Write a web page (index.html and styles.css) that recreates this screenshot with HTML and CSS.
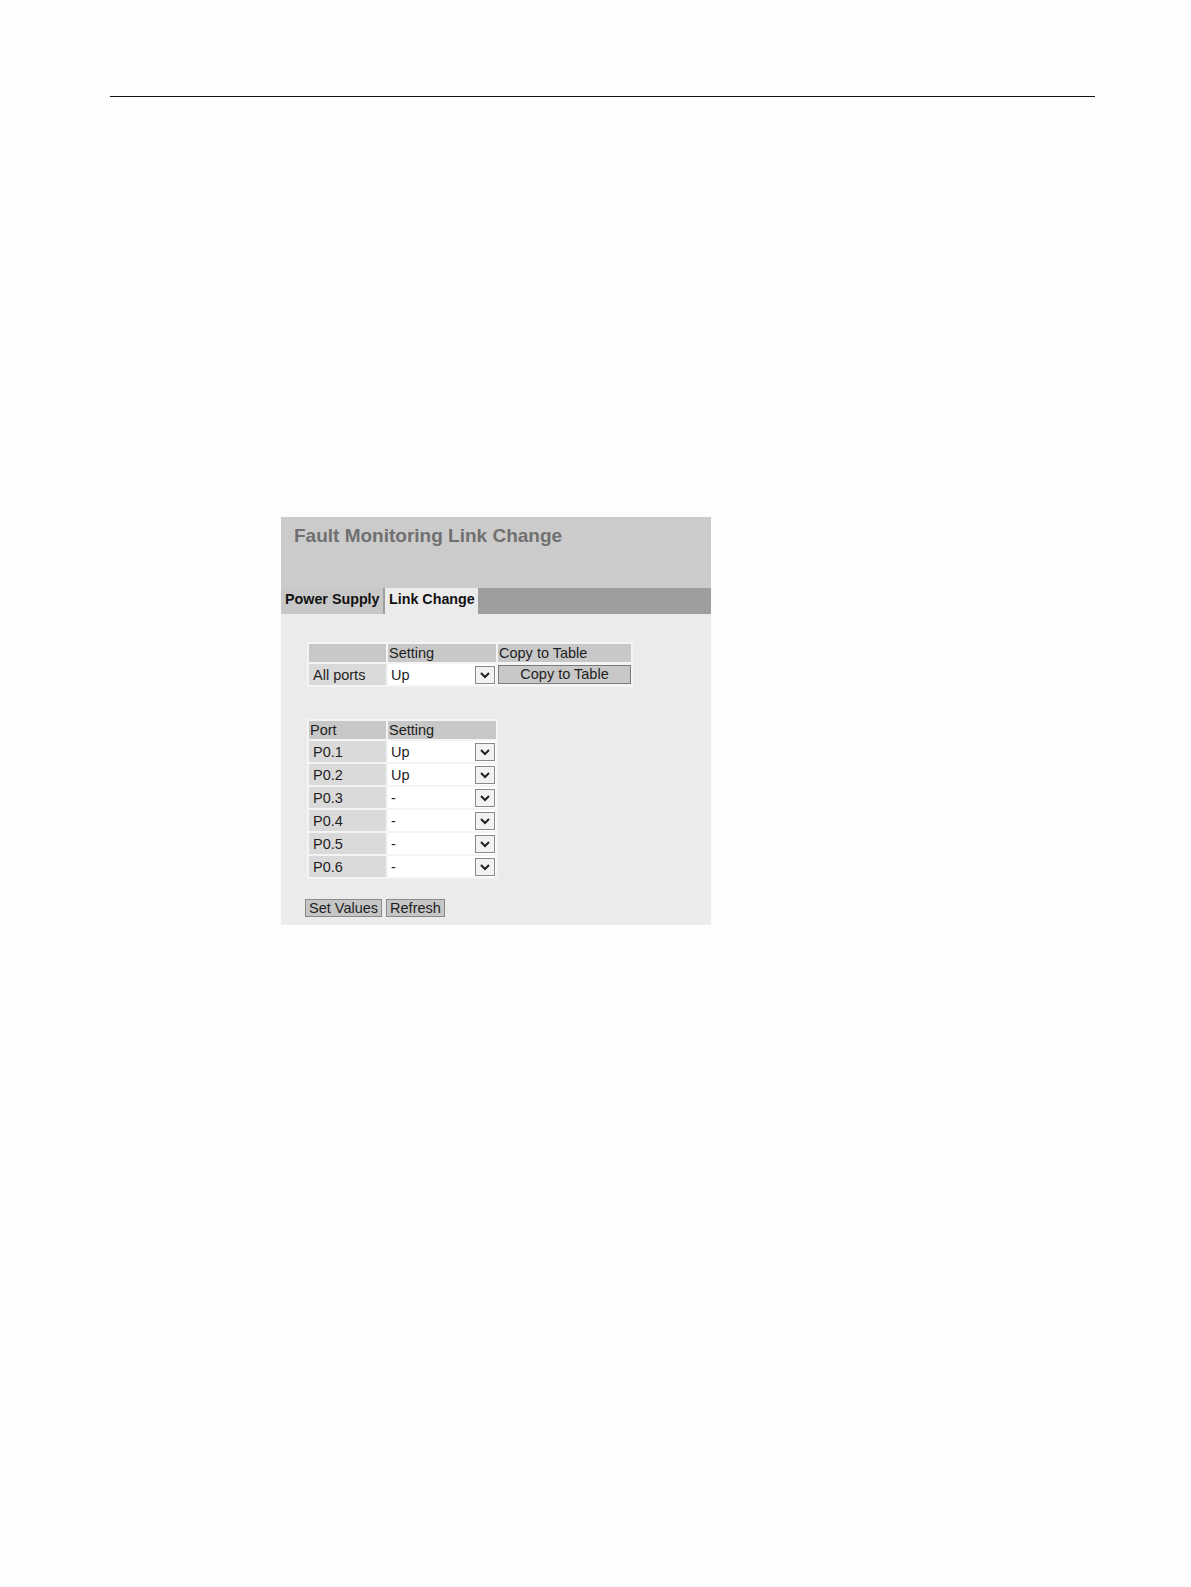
FILE: index.html
```html
<!DOCTYPE html>
<html>
<head>
<meta charset="utf-8">
<link rel="stylesheet" href="styles.css">
</head>
<body>
<div class="page">
  <div class="rule"></div>
  <div class="panel">
    <div class="header"><h1 class="title">Fault Monitoring Link Change</h1></div>
    <div class="tabbar">
      <div class="tab">Power Supply</div>
      <div class="tab active">Link Change</div>
    </div>
    <div class="content">
      <table class="grid t1">
        <tr class="head"><td class="c1"></td><td class="c2">Setting</td><td class="c3">Copy to Table</td></tr>
        <tr>
          <td class="label">All ports</td>
          <td class="sel"><div class="select"><span class="val">Up</span><span class="arrow"><svg width="12" height="8" viewBox="0 0 12 8"><path d="M2 2 L6 6 L10 2" fill="none" stroke="#222" stroke-width="2"/></svg></span></div></td>
          <td class="btncell"><div class="copybtn">Copy to Table</div></td>
        </tr>
      </table>
      <table class="grid t2">
        <tr class="head"><td class="c1">Port</td><td class="c2">Setting</td></tr>
        <tr><td class="label">P0.1</td><td class="sel"><div class="select"><span class="val">Up</span><span class="arrow"><svg width="12" height="8" viewBox="0 0 12 8"><path d="M2 2 L6 6 L10 2" fill="none" stroke="#222" stroke-width="2"/></svg></span></div></td></tr>
        <tr><td class="label">P0.2</td><td class="sel"><div class="select"><span class="val">Up</span><span class="arrow"><svg width="12" height="8" viewBox="0 0 12 8"><path d="M2 2 L6 6 L10 2" fill="none" stroke="#222" stroke-width="2"/></svg></span></div></td></tr>
        <tr><td class="label">P0.3</td><td class="sel"><div class="select"><span class="val">-</span><span class="arrow"><svg width="12" height="8" viewBox="0 0 12 8"><path d="M2 2 L6 6 L10 2" fill="none" stroke="#222" stroke-width="2"/></svg></span></div></td></tr>
        <tr><td class="label">P0.4</td><td class="sel"><div class="select"><span class="val">-</span><span class="arrow"><svg width="12" height="8" viewBox="0 0 12 8"><path d="M2 2 L6 6 L10 2" fill="none" stroke="#222" stroke-width="2"/></svg></span></div></td></tr>
        <tr><td class="label">P0.5</td><td class="sel"><div class="select"><span class="val">-</span><span class="arrow"><svg width="12" height="8" viewBox="0 0 12 8"><path d="M2 2 L6 6 L10 2" fill="none" stroke="#222" stroke-width="2"/></svg></span></div></td></tr>
        <tr><td class="label">P0.6</td><td class="sel"><div class="select"><span class="val">-</span><span class="arrow"><svg width="12" height="8" viewBox="0 0 12 8"><path d="M2 2 L6 6 L10 2" fill="none" stroke="#222" stroke-width="2"/></svg></span></div></td></tr>
      </table>
      <div class="actions">
        <div class="btn">Set Values</div>
        <div class="btn">Refresh</div>
      </div>
    </div>
  </div>
</div>
</body>
</html>
```

FILE: styles.css
```css
html, body {
  margin: 0;
  padding: 0;
  background: #fdfdfd;
}
body {
  font-family: "Liberation Sans", Arial, sans-serif;
  color: #1e1e1e;
}
.page {
  padding-top: 96px;
}
.rule {
  margin-left: 110px;
  width: 985px;
  height: 0;
  border-top: 1.5px solid #111;
}
.panel {
  margin-left: 281px;
  margin-top: 420px;
  width: 430px;
  background: #ebebeb;
}
.header {
  height: 71px;
  background: #cbcbcb;
  padding: 8px 0 0 13px;
  box-sizing: border-box;
}
.title {
  margin: 0;
  font-size: 19px;
  font-weight: bold;
  color: #707070;
  line-height: 22px;
}
.tabbar {
  height: 26px;
  background: #9e9e9e;
  display: flex;
  gap: 2px;
}
.tab {
  background: #c7c7c7;
  font-size: 14.3px;
  font-weight: bold;
  color: #111;
  padding: 3px 0 0 4px;
  line-height: 17px;
  width: 98px;
}
.tab.active {
  background: #ebebeb;
  width: 89px;
}
.content {
  padding: 28px 0 8px 26px;
}
.grid {
  border-collapse: separate;
  border-spacing: 2px;
  background: #f4f4f4;
  font-size: 14.5px;
}
.grid td {
  padding: 0;
  height: 18px;
  line-height: 18px;
}
.head td {
  background: #c8c8c8;
  padding-left: 1px;
}
.c1 { width: 76px; }
.c2 { width: 107px; }
.c3 { width: 132px; }
.label {
  background: #dadada;
  padding-left: 4px !important;
}
.grid tr + tr td {
  height: 21px;
}
.sel {
  background: #fff;
}
.select {
  display: flex;
  align-items: center;
  justify-content: space-between;
  height: 21px;
}
.val {
  padding-left: 3px;
}
.arrow {
  width: 20px;
  height: 18px;
  box-sizing: border-box;
  border: 1px solid #8a8a8a;
  background: #f2f2f2;
  display: flex;
  align-items: center;
  justify-content: center;
  margin-right: 1px;
}
.btncell {
  background: #f4f4f4;
}
.copybtn {
  height: 19px;
  line-height: 17px;
  box-sizing: border-box;
  border: 1px solid #7a7a7a;
  background: #c8c8c8;
  text-align: center;
}
.t2 {
  margin-top: 32px;
}
.actions {
  display: flex;
  gap: 4px;
  margin-top: 20px;
  margin-left: -2px;
}
.btn {
  font-size: 14.5px;
  height: 18px;
  line-height: 16px;
  box-sizing: border-box;
  border: 1px solid #8a8a8a;
  background: #c6c6c6;
  padding: 0 3px;
}
```
